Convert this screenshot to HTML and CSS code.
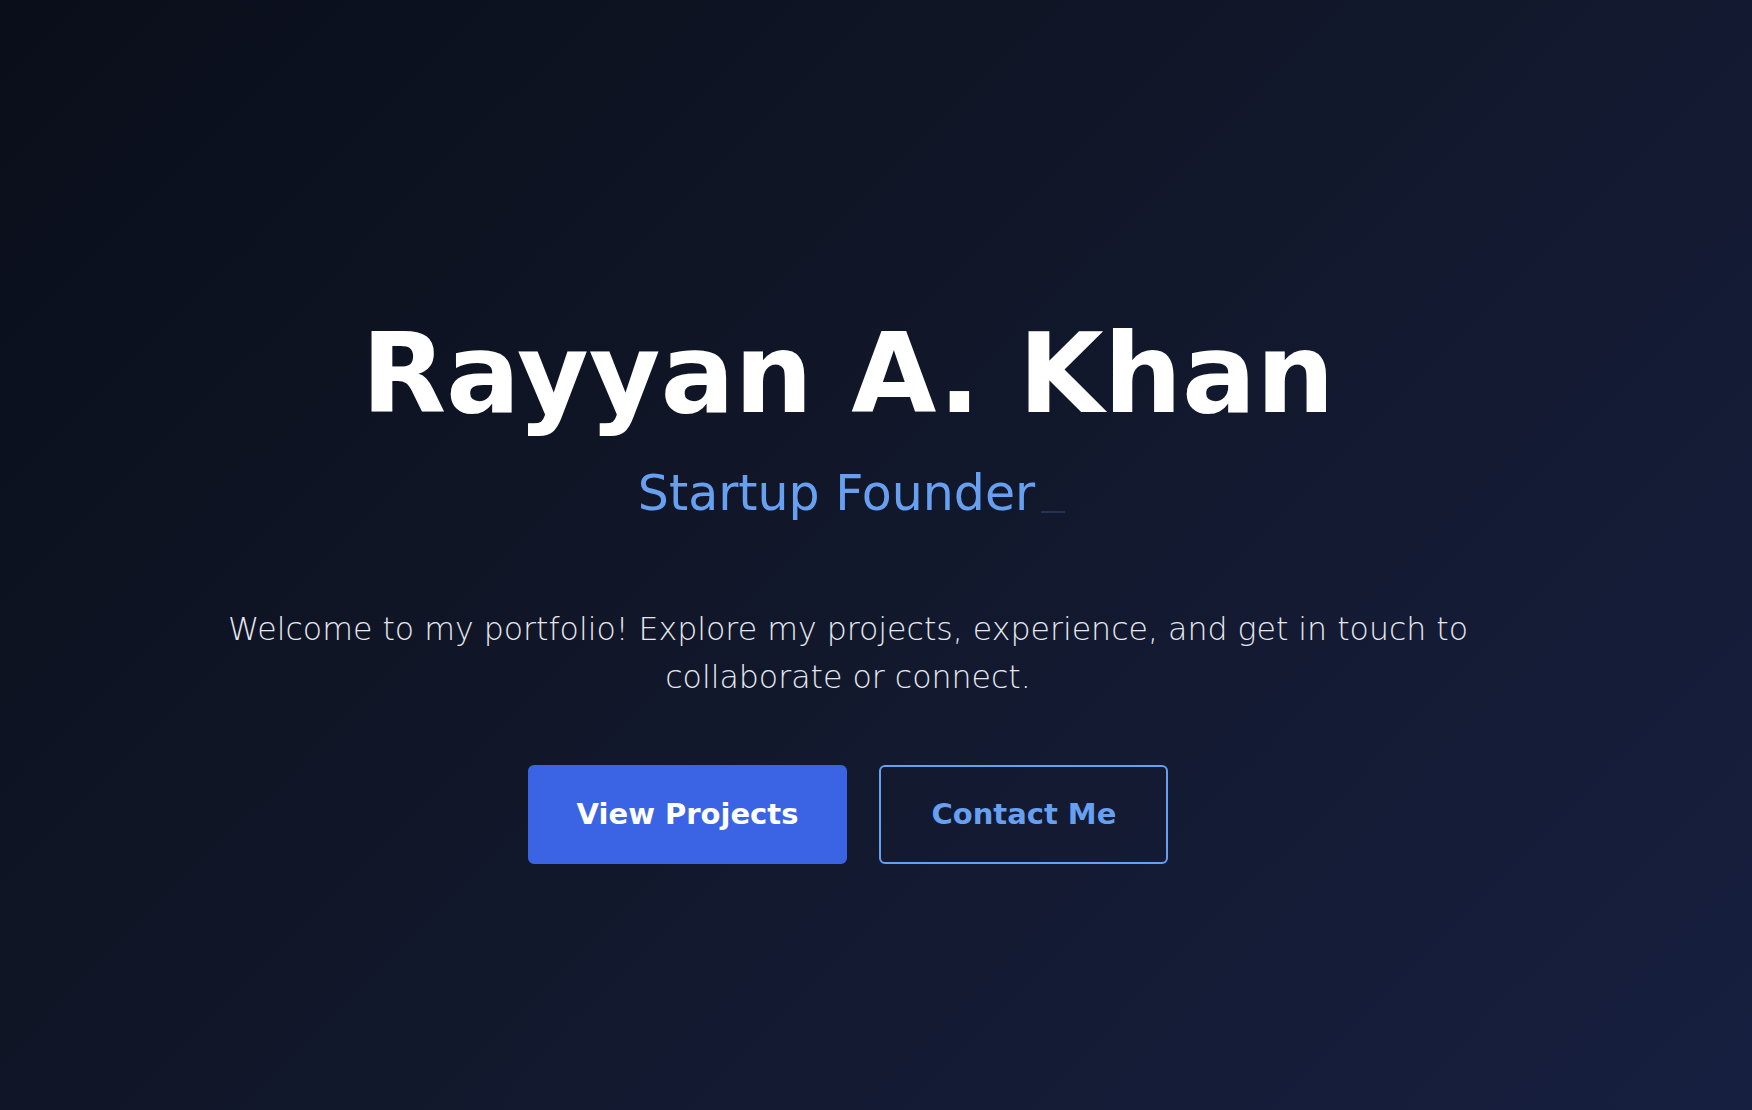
FILE: index.html
```html
<!DOCTYPE html>
<html lang="en">
<head>
<meta charset="utf-8">
<title>Rayyan A. Khan</title>
<link rel="stylesheet" href="styles.css">
</head>
<body>
<section class="hero">
  <h1 class="hero-name">Rayyan A. Khan</h1>
  <p class="hero-role">Startup Founder<span class="cursor"></span></p>
  <p class="hero-intro">Welcome to my portfolio! Explore my projects, experience, and get in touch to collaborate or connect.</p>
  <div class="hero-actions">
    <a class="btn btn-primary" href="#projects">View Projects</a>
    <a class="btn btn-outline" href="#contact">Contact Me</a>
  </div>
</section>
</body>
</html>
```
FILE: styles.css
```css
html, body {
  margin: 0;
  padding: 0;
}
body {
  font-family: "DejaVu Sans", "Noto Sans", sans-serif;
  background: #0a0e1a;
  color: #fff;
}
.hero {
  box-sizing: border-box;
  height: 100vh;
  overflow: hidden;
  padding: 308px 56px 0 0;
  display: flex;
  flex-direction: column;
  align-items: center;
  text-align: center;
  background: linear-gradient(135deg, #0a0e1a 0%, #111729 45%, #171f40 100%);
}
.hero-name {
  margin: 0;
  font-size: 110px;
  line-height: 1.2;
  font-weight: 700;
  color: #ffffff;
}
.hero-role {
  margin: 25px 0 0;
  padding-left: 7px;
  font-size: 49px;
  line-height: 1.2;
  font-weight: 400;
  color: #67a0f0;
}
.cursor {
  display: inline-block;
  width: 24px;
  height: 2px;
  margin-left: 6px;
  background: rgba(103, 160, 240, 0.2);
  vertical-align: -3px;
}
.hero-intro {
  margin: 81px 0 0;
  max-width: 1300px;
  font-size: 31.6px;
  line-height: 48px;
  font-weight: 300;
  color: #e6e8ee;
}
.hero-actions {
  margin-top: 64px;
  display: flex;
  gap: 32px;
}
.btn {
  display: inline-block;
  padding: 30px 47px;
  border: 2px solid transparent;
  border-radius: 6px;
  font-size: 29px;
  line-height: 1.2;
  font-weight: 600;
  text-decoration: none;
}
.btn-primary {
  background: #3a64e4;
  border-color: #3a64e4;
  color: #ffffff;
}
.btn-outline {
  padding-left: 50px;
  padding-right: 50px;
  background: transparent;
  border-color: #67a0f0;
  color: #67a0f0;
}
```
